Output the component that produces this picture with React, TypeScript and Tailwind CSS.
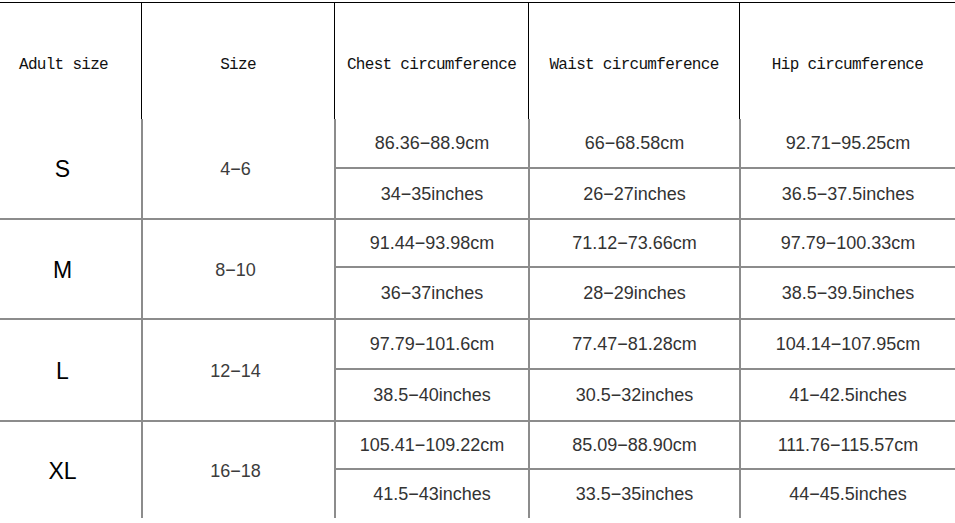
const groups = [
  {
    label: 'S',
    size: '4−6',
    h: 'h-[99px]',
    top: 'h-[48px]',
    cells: [
      ['86.36−88.9cm', '34−35inches'],
      ['66−68.58cm', '26−27inches'],
      ['92.71−95.25cm', '36.5−37.5inches'],
    ],
  },
  {
    label: 'M',
    size: '8−10',
    h: 'h-[100px]',
    top: 'h-[46px]',
    cells: [
      ['91.44−93.98cm', '36−37inches'],
      ['71.12−73.66cm', '28−29inches'],
      ['97.79−100.33cm', '38.5−39.5inches'],
    ],
  },
  {
    label: 'L',
    size: '12−14',
    h: 'h-[102px]',
    top: 'h-[48px]',
    cells: [
      ['97.79−101.6cm', '38.5−40inches'],
      ['77.47−81.28cm', '30.5−32inches'],
      ['104.14−107.95cm', '41−42.5inches'],
    ],
  },
  {
    label: 'XL',
    size: '16−18',
    h: 'h-[98px]',
    top: 'h-[46px]',
    cells: [
      ['105.41−109.22cm', '41.5−43inches'],
      ['85.09−88.90cm', '33.5−35inches'],
      ['111.76−115.57cm', '44−45.5inches'],
    ],
  },
]

const widths = ['w-[141px]', 'w-[193px]', 'w-[194px]', 'w-[211px]', 'w-[216px]']

function HeaderRow() {
  const titles = ['Adult size', 'Size', 'Chest circumference', 'Waist circumference', 'Hip circumference']
  return (
    <div className="flex h-[117px] border-t border-black">
      {titles.map((t, i) => (
        <div
          key={t}
          className={`${widths[i]} flex items-center justify-center pt-[8px] text-[16px] tracking-[-0.7px] text-[#111] ${
            i > 0 ? 'border-l border-black' : 'pr-[14px]'
          }`}
          style={{ fontFamily: '"Liberation Mono", monospace' }}
        >
          {t}
        </div>
      ))}
    </div>
  )
}

export default function App() {
  return (
    <div
      className="w-[955px] h-[523px] bg-white pt-[2px] overflow-hidden"
      style={{ fontFamily: '"Liberation Sans", Arial, sans-serif' }}
    >
      <HeaderRow />
      {groups.map((g, gi) => (
        <div
          key={g.label}
          className={`flex ${g.h} ${gi > 0 ? 'border-t-2 border-[#8c8c8c]' : ''}`}
        >
          <div className={`${widths[0]} flex items-center justify-center pr-[16px] pt-[2px] text-[23px] text-black`}>
            {g.label}
          </div>
          <div
            className={`${widths[1]} flex items-center justify-center border-l-2 border-[#8c8c8c] pr-[6px] pt-[2px] text-[18px] text-[#3c3c3c]`}
          >
            {g.size}
          </div>
          {g.cells.map((c, ci) => (
            <div key={ci} className={`${widths[ci + 2]} flex flex-col border-l-2 border-[#8c8c8c]`}>
              <div className={`${g.top} flex items-center justify-center pt-[1px] text-[18px] text-[#333]`}>
                {c[0]}
              </div>
              <div className="flex-1 flex items-center justify-center border-t-2 border-[#8c8c8c] pt-[1px] text-[18px] text-[#333]">
                {c[1]}
              </div>
            </div>
          ))}
        </div>
      ))}
    </div>
  )
}
